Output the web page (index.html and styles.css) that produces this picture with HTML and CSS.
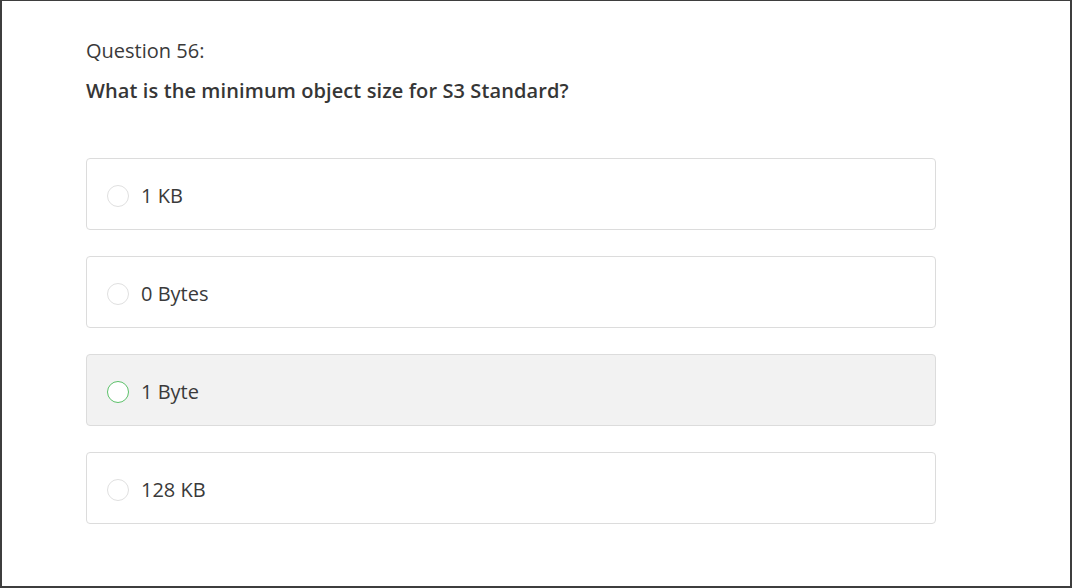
FILE: index.html
```html
<!DOCTYPE html>
<html>
<head>
<meta charset="utf-8">
<link rel="stylesheet" href="styles.css">
</head>
<body>
<div class="page">
  <div class="quiz">
    <div class="q-label">Question 56:</div>
    <div class="q-text">What is the minimum object size for S3 Standard?</div>
    <div class="options">
      <div class="option"><span class="radio"></span><span class="opt-text">1 KB</span></div>
      <div class="option"><span class="radio"></span><span class="opt-text">0 Bytes</span></div>
      <div class="option selected"><span class="radio"></span><span class="opt-text">1 Byte</span></div>
      <div class="option"><span class="radio"></span><span class="opt-text">128 KB</span></div>
    </div>
  </div>
</div>
</body>
</html>
```
FILE: styles.css
```css
html, body {
  margin: 0;
  padding: 0;
  background: #fff;
}
.page {
  width: 1072px;
  height: 588px;
  box-sizing: border-box;
  border: 2px solid #3e3e3e;
  border-top-width: 1px;
  font-family: "Open Sans", "Liberation Sans", sans-serif;
  color: #333;
}
.quiz {
  padding: 36px 0 0 84px;
  width: 850px;
}
.q-label {
  font-size: 20px;
  line-height: 28px;
  color: #3a3a3a;
}
.q-text {
  margin-top: 12px;
  font-size: 20px;
  line-height: 28px;
  font-weight: 600;
  letter-spacing: 0.1px;
  color: #363636;
}
.options {
  margin-top: 53px;
  display: flex;
  flex-direction: column;
  gap: 26px;
}
.option {
  height: 72px;
  box-sizing: border-box;
  border: 1px solid #dcdcdc;
  border-radius: 4px;
  display: flex;
  align-items: center;
  padding: 4px 0 0 20px;
  background: #fff;
}
.option.selected {
  background: #f2f2f2;
}
.radio {
  width: 22px;
  height: 22px;
  box-sizing: border-box;
  border: 1px solid #e0e0e0;
  border-radius: 50%;
  background: #fff;
  flex: none;
}
.option.selected .radio {
  border-color: #5cc16a;
}
.opt-text {
  margin-left: 12px;
  font-size: 20px;
  color: #3a3a3a;
  line-height: 28px;
}
```
